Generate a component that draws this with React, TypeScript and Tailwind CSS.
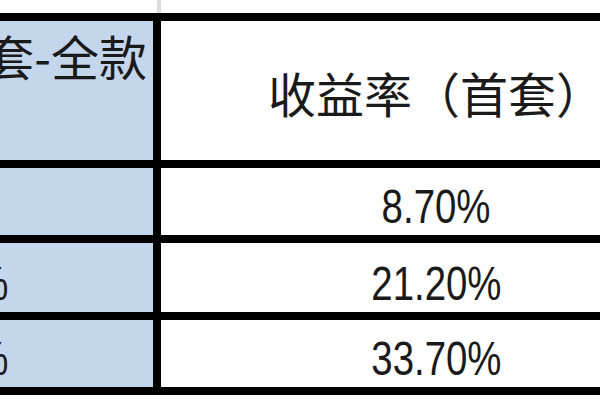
const rows = [
  { left: "5.20%", right: "8.70%", h: "h-[75px]" },
  { left: "10.50%", right: "21.20%", h: "h-[77px]" },
  { left: "15.80%", right: "33.70%", h: "h-[75px]" },
]

function Num({ children }: { children: string }) {
  return (
    <span className="inline-block scale-x-[0.8] font-['Liberation_Sans',Arial,sans-serif] text-[48px] leading-none text-[#1a1a1a]">
      {children}
    </span>
  )
}

export default function App() {
  return (
    <div className="w-[600px] h-[400px] overflow-hidden bg-white">
      {/* grid line of the sheet above the table */}
      <div className="flex h-[13px]">
        <div className="w-[157px]" />
        <div className="w-[4px] bg-[#dcdcdc]" />
      </div>

      <div className="ml-[-279px] w-[1000px] border-t-8 border-black font-['Noto_Sans_CJK_SC',sans-serif]">
        {/* header */}
        <div className="flex h-[147px] border-b-8 border-black">
          <div className="flex w-[440px] shrink-0 items-start justify-end border-r-8 border-black bg-[#c3d6ec] pt-[10px] pr-[6px]">
            <span className="whitespace-nowrap text-[48px] leading-none text-[#1a1a1a]">收益率（首套-全款</span>
          </div>
          <div className="flex w-[550px] shrink-0 items-center justify-center pt-[2px]">
            <span className="whitespace-nowrap text-[48px] leading-none text-[#1a1a1a]">收益率（首套）</span>
          </div>
        </div>

        {rows.map((r) => (
          <div key={r.right} className={`flex border-b-8 border-black ${r.h}`}>
            <div className="flex w-[440px] shrink-0 items-end justify-center border-r-8 border-black bg-[#c3d6ec] pb-[4px] pl-[12px]">
              <Num>{r.left}</Num>
            </div>
            <div className="flex w-[550px] shrink-0 items-end justify-center pb-[4px]">
              <Num>{r.right}</Num>
            </div>
          </div>
        ))}
      </div>
    </div>
  )
}
